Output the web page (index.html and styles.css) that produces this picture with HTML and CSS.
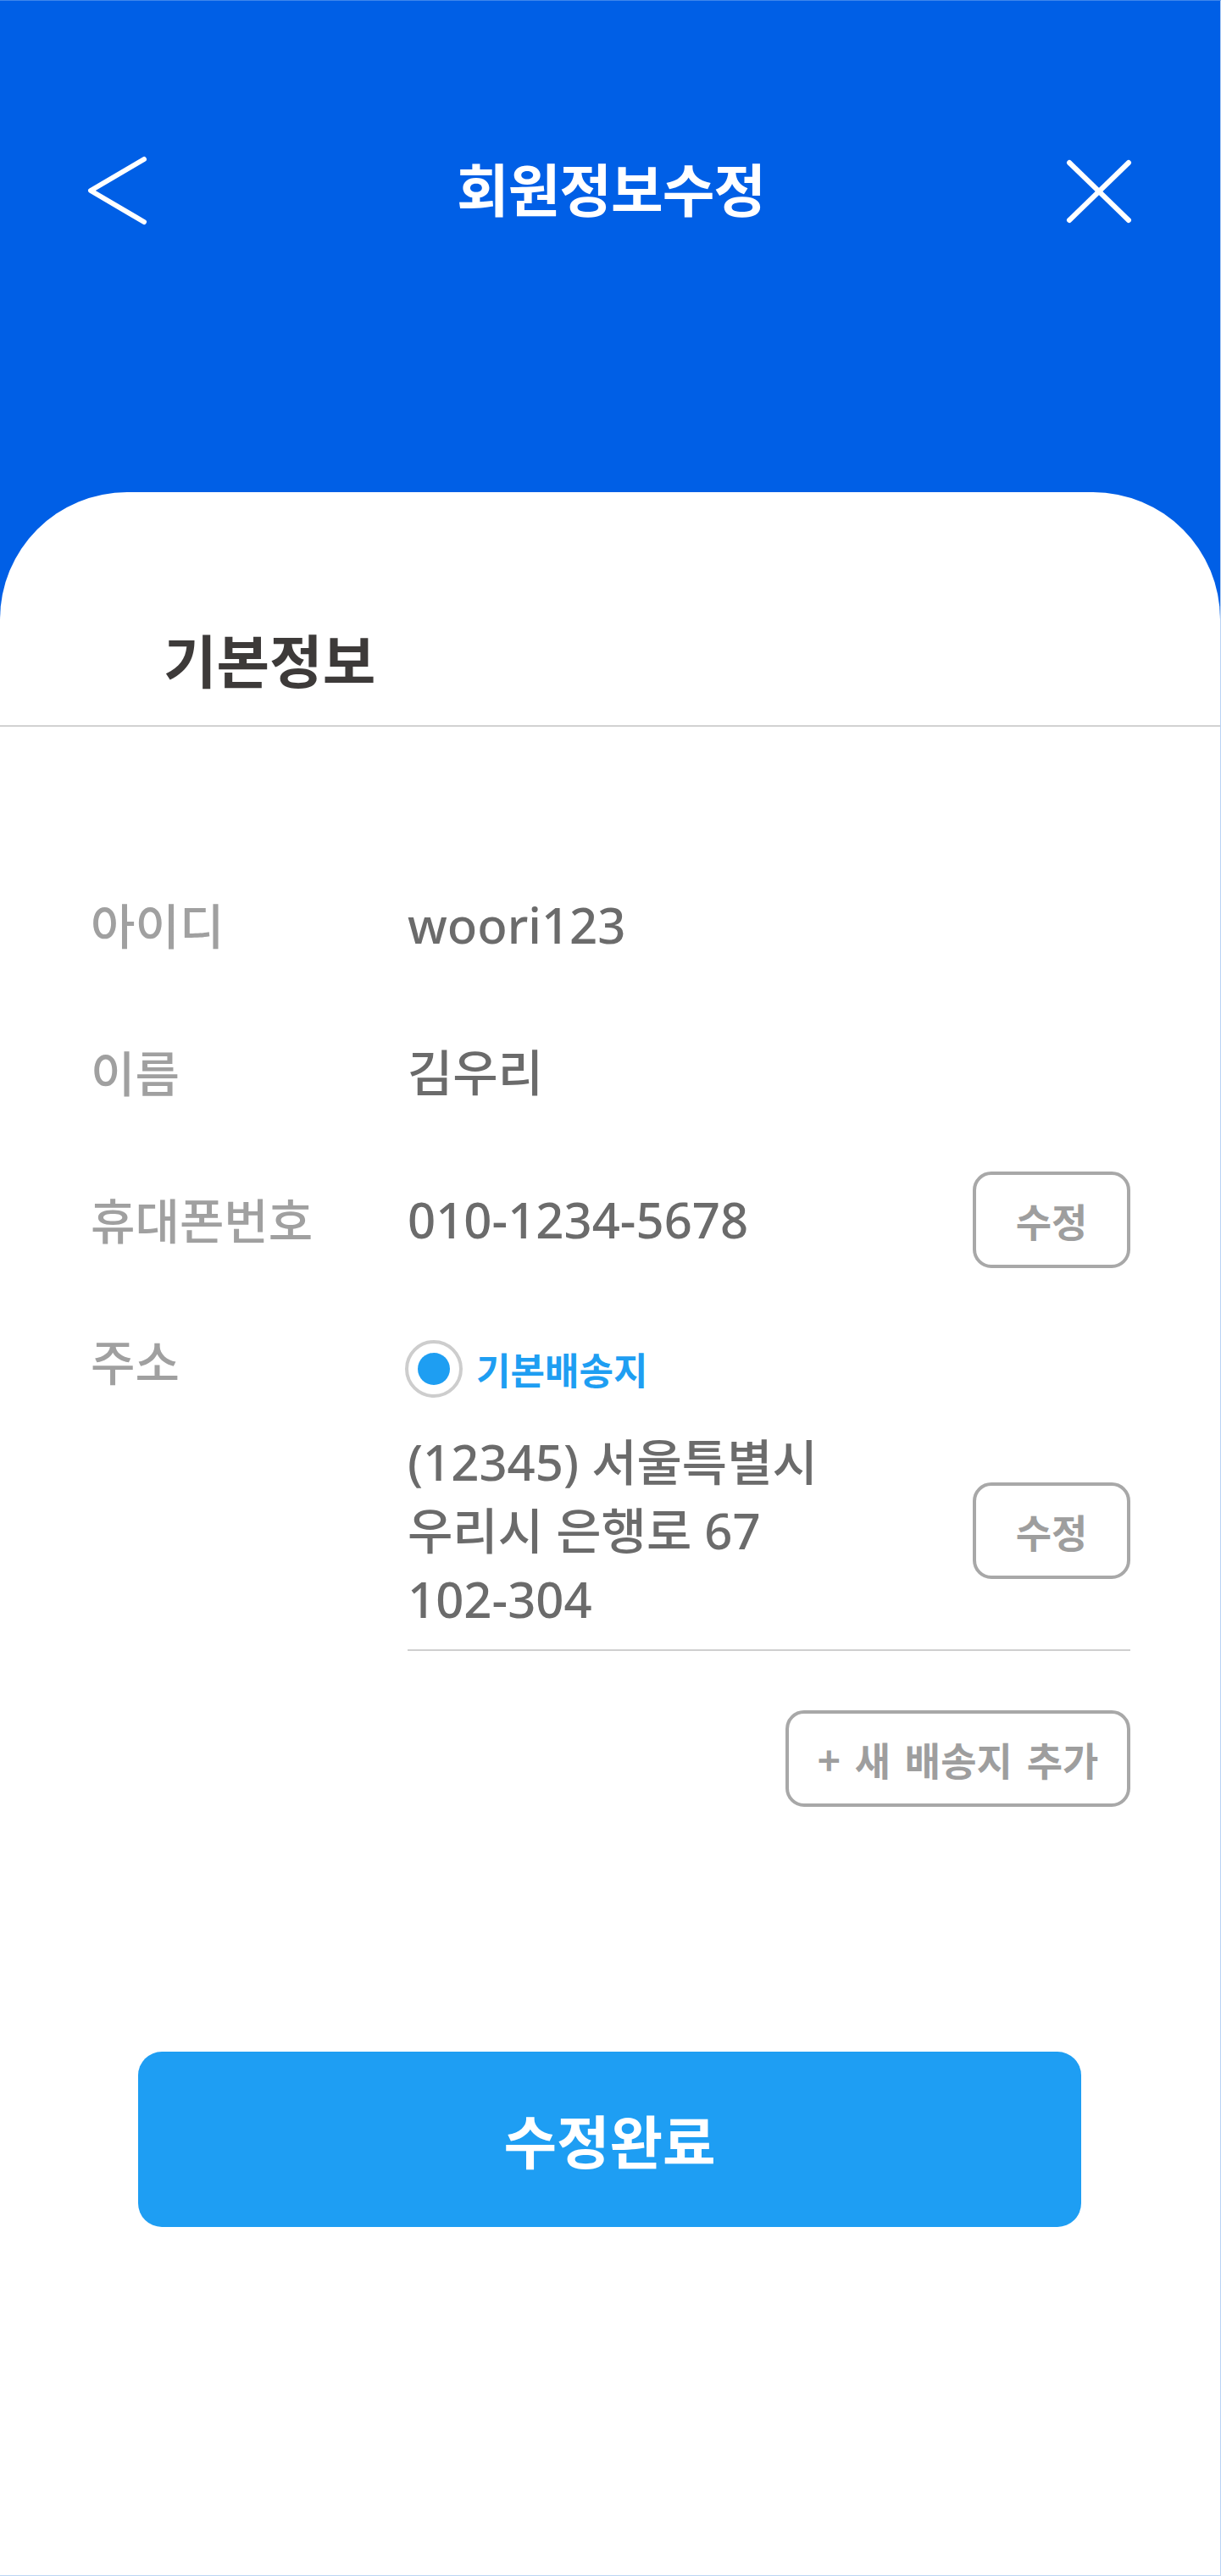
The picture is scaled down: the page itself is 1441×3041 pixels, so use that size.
FILE: index.html
```html
<!DOCTYPE html>
<html lang="ko">
<head>
<meta charset="utf-8">
<title>회원정보수정</title>
<link rel="stylesheet" href="styles.css">
</head>
<body>
<div class="screen">
  <header class="top">
    <nav class="nav">
      <button class="icon-btn" type="button" aria-label="뒤로">
        <svg width="90" height="90" viewBox="0 0 90 90"><polyline points="70,8 7,45 70,82" fill="none" stroke="#fff" stroke-width="6" stroke-linecap="round" stroke-linejoin="round"/></svg>
      </button>
      <h1 class="title">회원정보수정</h1>
      <button class="icon-btn" type="button" aria-label="닫기">
        <svg width="90" height="90" viewBox="0 0 90 90"><g stroke="#fff" stroke-width="6" stroke-linecap="round"><line x1="10" y1="12" x2="80" y2="80"/><line x1="80" y1="12" x2="10" y2="80"/></g></svg>
      </button>
    </nav>
  </header>
  <main class="card">
    <h2 class="section-title">기본정보</h2>
    <div class="form">
      <div class="row">
        <span class="label">아이디</span>
        <span class="value">woori123</span>
      </div>
      <div class="row">
        <span class="label">이름</span>
        <span class="value">김우리</span>
      </div>
      <div class="row">
        <span class="label">휴대폰번호</span>
        <span class="value">010-1234-5678</span>
        <button class="line-btn" type="button">수정</button>
      </div>
      <div class="row addr">
        <span class="label addr-label">주소</span>
        <div class="addr-content">
          <div class="radio-line">
            <span class="radio"><span class="dot"></span></span>
            <span class="radio-text">기본배송지</span>
          </div>
          <div class="addr-body">
            <p class="addr-text">(12345) 서울특별시<br>우리시 은행로 67<br>102-304</p>
            <button class="line-btn" type="button">수정</button>
          </div>
        </div>
      </div>
      <div class="add-row">
        <button class="line-btn add-btn" type="button">+ 새 배송지 추가</button>
      </div>
    </div>
    <div class="submit-wrap">
      <button class="submit" type="button">수정완료</button>
    </div>
  </main>
</div>
</body>
</html>
```

FILE: styles.css
```css
* { box-sizing: border-box; }
html, body { margin: 0; padding: 0; background: #fff; }
body {
  font-family: "Noto Sans", "Noto Sans CJK KR", sans-serif;
  width: 1441px;
}
.screen {
  width: 1441px;
  min-height: 3041px;
  background: linear-gradient(#005fe6 0, #005fe6 760px, #fff 760px);
  border-top: 1px solid #3f86ec;
  border-right: 1px solid #b9d3f4;
  border-bottom: 1px solid #bcd6f5;
  display: flex;
  flex-direction: column;
}
.top {
  height: 580px;
  padding-top: 179px;
}
.nav {
  height: 90px;
  padding: 0 98px 0 100px;
  display: flex;
  align-items: center;
  justify-content: space-between;
}
.icon-btn {
  width: 90px;
  height: 90px;
  padding: 0;
  border: 0;
  background: none;
  display: block;
}
.icon-btn svg { display: block; }
.title {
  margin: 0;
  color: #fff;
  font-family: "Noto Sans CJK KR", sans-serif;
  font-size: 67px;
  font-weight: 700;
  line-height: 90px;
  padding-bottom: 8px;
  letter-spacing: -1px;
}
.card {
  flex: 1;
  background: #fff;
  border-radius: 150px 150px 0 0;
}
.section-title {
  margin: 0;
  padding: 164px 0 45px 193px;
  font-family: "Noto Sans CJK KR", sans-serif;
  font-size: 68px;
  line-height: 66px;
  font-weight: 700;
  color: #3d3a39;
  border-bottom: 2px solid #d2d2d2;
}
.form {
  padding: 177px 106px 0 107px;
}
.row {
  display: grid;
  grid-template-columns: 374px 1fr auto;
  align-items: center;
  min-height: 114px;
  margin-bottom: 60px;
}
.label {
  font-family: "Noto Sans CJK KR", sans-serif;
  font-size: 57px;
  font-weight: 500;
  line-height: 80px;
  color: #a0a0a0;
  padding-bottom: 4px;
}
.value {
  font-size: 58px;
  font-weight: 500;
  line-height: 80px;
  color: #6b6b6b;
}
.line-btn {
  height: 114px;
  min-width: 186px;
  padding: 0 30px;
  border: 4px solid #a8a8a8;
  border-radius: 22px;
  background: #fff;
  font-family: "Noto Sans CJK KR", sans-serif;
  font-size: 46px;
  font-weight: 700;
  color: #9e9e9e;
}
.row.addr {
  align-items: start;
  margin-bottom: 0;
}
.addr-label { padding-top: 8px; }
.addr-content {
  grid-column: 2 / 4;
}
.radio-line {
  display: flex;
  align-items: center;
  gap: 16px;
  padding-top: 25px;
  margin-left: -3px;
}
.radio {
  width: 68px;
  height: 68px;
  border: 4px solid #cdcdcd;
  border-radius: 50%;
  display: flex;
  align-items: center;
  justify-content: center;
}
.dot {
  width: 38px;
  height: 38px;
  border-radius: 50%;
  background: #1e9ef2;
}
.radio-text {
  font-family: "Noto Sans CJK KR", sans-serif;
  font-size: 44px;
  font-weight: 700;
  color: #1e9ef2;
}
.addr-body {
  margin-top: 35px;
  padding-bottom: 19px;
  border-bottom: 2px solid #cfcfcf;
  display: flex;
  align-items: center;
  justify-content: space-between;
}
.addr-text {
  margin: 0;
  font-size: 58px;
  font-weight: 500;
  line-height: 81px;
  color: #6b6b6b;
}
.add-row {
  display: flex;
  justify-content: flex-end;
  margin-top: 70px;
}
.add-btn {
  width: 407px;
  padding: 0;
  word-spacing: 4px;
}
.submit-wrap {
  padding: 289px 164px 0 163px;
}
.submit {
  width: 100%;
  height: 207px;
  border: 0;
  border-radius: 28px;
  background: #1e9ef3;
  color: #fff;
  font-family: "Noto Sans CJK KR", sans-serif;
  font-size: 68px;
  font-weight: 700;
}
```
